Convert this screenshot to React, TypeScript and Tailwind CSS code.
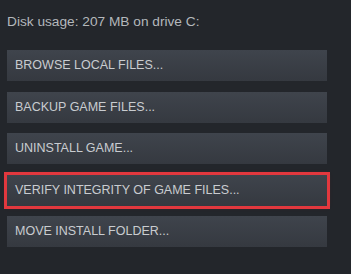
const actions = [
  'BROWSE LOCAL FILES...',
  'BACKUP GAME FILES...',
  'UNINSTALL GAME...',
  'VERIFY INTEGRITY OF GAME FILES...',
  'MOVE INSTALL FOLDER...',
]

const highlighted = 'VERIFY INTEGRITY OF GAME FILES...'

export default function App() {
  return (
    <div
      className="w-[351px] h-[274px] bg-[#23262b] pl-[7px] pt-[14px] overflow-hidden"
      style={{ fontFamily: '"Liberation Sans", Arial, sans-serif' }}
    >
      <div className="text-[13.7px] leading-[16px] text-[#b4b8bc]">
        Disk usage: 207 MB on drive C:
      </div>

      <div className="mt-[20px] flex flex-col gap-[10.5px] w-[320px]">
        {actions.map((label) => (
          <button
            key={label}
            type="button"
            className={
              label === highlighted
                ? 'h-[31px] px-[8px] text-left text-[12.5px] text-[#c9ccd0] bg-gradient-to-b from-[#3f444c] to-[#353940] outline-[3px] outline-solid outline-[#e2383e] shadow-[0_0_4px_rgba(226,56,62,0.6)]'
                : 'h-[31px] px-[8px] text-left text-[12.5px] text-[#c9ccd0] bg-gradient-to-b from-[#3f444c] to-[#353940]'
            }
          >
            {label}
          </button>
        ))}
      </div>
    </div>
  )
}
